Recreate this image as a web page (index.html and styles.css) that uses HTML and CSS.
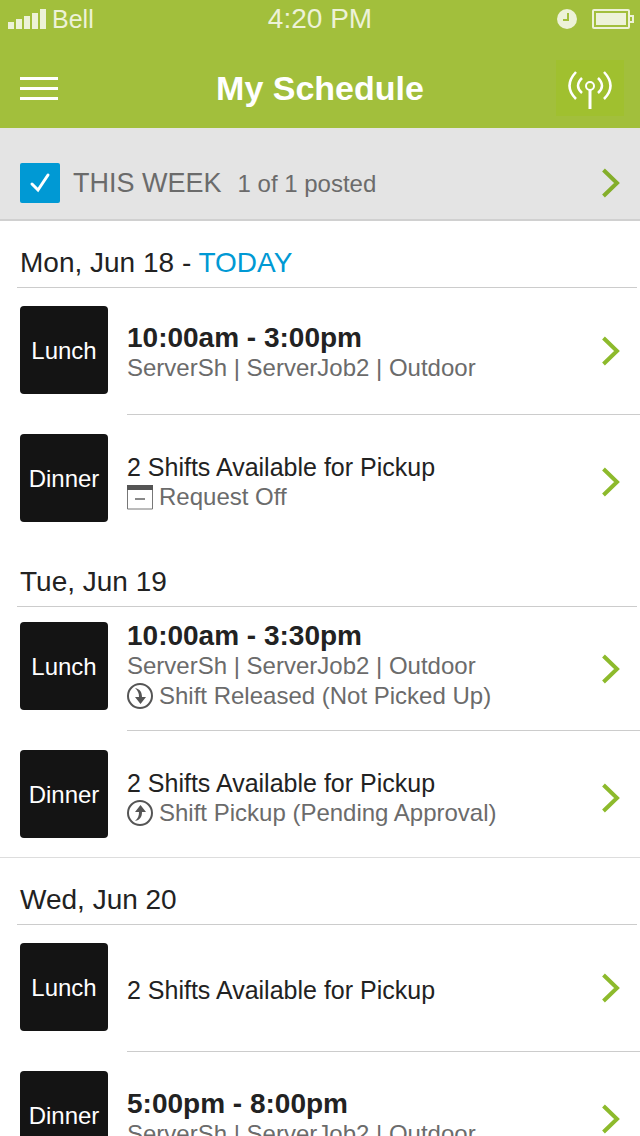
FILE: index.html
```html
<!DOCTYPE html>
<html lang="en">
<head>
<meta charset="utf-8">
<title>My Schedule</title>
<meta name="viewport" content="width=device-width,initial-scale=1">
<link rel="stylesheet" href="styles.css">
</head>
<body>

<!-- shared icons -->
<svg class="sprite" aria-hidden="true">
  <symbol id="chevron" viewBox="0 0 20 30"><path d="M3.500 2 L17 15 L3.500 28" fill="none" stroke="currentColor" stroke-width="4"/></symbol>
</svg>

<header class="top">
  <div class="status">
    <div class="carrier">
      <svg width="38" height="20" viewBox="0 0 38 20" fill="currentColor"><path d="M0 13h6v7H0zM8 10h6v10H8zM16 7h6v13h-6zM24 4h6v16h-6zM32 0h6v20h-6z"/></svg>
      <span>Bell</span>
    </div>
    <time class="clock">4:20 PM</time>
    <div class="power">
      <svg width="20" height="20" viewBox="0 0 20 20"><circle cx="10" cy="10" r="10" fill="currentColor"/><path d="M11 4v7H6" fill="none" stroke="#a2bf3c" stroke-width="2"/></svg>
      <svg width="42" height="20" viewBox="0 0 42 20"><rect x="1" y="1" width="36" height="18" rx="1" fill="none" stroke="currentColor" stroke-width="2"/><path d="M4 4h30v12H4z" fill="currentColor"/><path d="M38 7h3v6h-3" fill="none" stroke="currentColor" stroke-width="2"/></svg>
    </div>
  </div>
  <nav class="bar">
    <button class="menu" aria-label="Menu">
      <svg width="38" height="24" viewBox="0 0 38 24" fill="currentColor"><path d="M0 1h38v3H0zM0 11h38v3H0zM0 21h38v3H0z"/></svg>
    </button>
    <h1>My Schedule</h1>
    <button class="signal" aria-label="Broadcast">
      <svg width="44" height="42" viewBox="0 -4 44 42" fill="none" stroke="currentColor">
        <circle cx="22" cy="15" r="4" stroke-width="2"/>
        <path d="M22 19v19" stroke-width="3"/>
        <path d="M14 7Q6 15 14 22M30 7Q38 15 30 22M8 1Q-5 15 8 28M36 1Q49 15 36 28" stroke-width="2.500"/>
      </svg>
    </button>
  </nav>
</header>

<section class="week">
  <label class="tick">
    <input type="checkbox" checked aria-label="This week">
    <svg width="40" height="40" viewBox="0 0 40 40"><path d="M12 21l6 6L28 12" fill="none" stroke="#fff" stroke-width="3" stroke-linecap="round"/></svg>
  </label>
  <a class="week-link" href="#week">
    <span class="week-name">THIS WEEK</span>
    <span class="week-posted">1 of 1 posted</span>
    <svg class="chevron"><use href="#chevron"/></svg>
  </a>
</section>

<main>
  <section class="day">
    <h2>Mon, Jun 18 - <span class="today">TODAY</span></h2>
    <a class="shift" href="#mon-lunch">
      <span class="meal">Lunch</span>
      <span class="info"><strong>10:00am - 3:00pm</strong><span>ServerSh | ServerJob2 | Outdoor</span></span>
      <svg class="chevron"><use href="#chevron"/></svg>
    </a>
    <a class="shift" href="#mon-dinner">
      <span class="meal">Dinner</span>
      <span class="info">
        <b class="open">2 Shifts Available for Pickup</b>
        <span class="note">
          <svg width="26" height="26" viewBox="0 0 26 26"><path d="M.5 3v22h25V3" fill="none" stroke="#777"/><path d="M0 1h26v5H0z" fill="#555"/><path d="M8 15h10" stroke="#888" stroke-width="2"/></svg>
          Request Off
        </span>
      </span>
      <svg class="chevron"><use href="#chevron"/></svg>
    </a>
  </section>

  <section class="day tight">
    <h2>Tue, Jun 19</h2>
    <a class="shift" href="#tue-lunch">
      <span class="meal">Lunch</span>
      <span class="info">
        <strong>10:00am - 3:30pm</strong>
        <span>ServerSh | ServerJob2 | Outdoor</span>
        <span class="note">
          <svg width="26" height="26" viewBox="0 0 26 26"><circle cx="13" cy="13" r="12" fill="none" stroke="#555" stroke-width="2"/><path d="M8 5c5 1 7 4 7 9h4l-5.500 7L8 14h4c0-4-1-6-4-9z" fill="#555"/></svg>
          Shift Released (Not Picked Up)
        </span>
      </span>
      <svg class="chevron"><use href="#chevron"/></svg>
    </a>
    <a class="shift" href="#tue-dinner">
      <span class="meal">Dinner</span>
      <span class="info">
        <b class="open">2 Shifts Available for Pickup</b>
        <span class="note">
          <svg width="26" height="26" viewBox="0 0 26 26"><circle cx="13" cy="13" r="12" fill="none" stroke="#555" stroke-width="2"/><path d="M8 21c5-1 7-4 7-9h4l-5.500-7L8 12h4c0 4-1 6-4 9z" fill="#555"/></svg>
          Shift Pickup (Pending Approval)
        </span>
      </span>
      <svg class="chevron"><use href="#chevron"/></svg>
    </a>
  </section>

  <section class="day ruled">
    <h2>Wed, Jun 20</h2>
    <a class="shift" href="#wed-lunch">
      <span class="meal">Lunch</span>
      <span class="info"><b class="open">2 Shifts Available for Pickup</b></span>
      <svg class="chevron"><use href="#chevron"/></svg>
    </a>
    <a class="shift" href="#wed-dinner">
      <span class="meal">Dinner</span>
      <span class="info"><strong>5:00pm - 8:00pm</strong><span>ServerSh | ServerJob2 | Outdoor</span></span>
      <svg class="chevron"><use href="#chevron"/></svg>
    </a>
  </section>
</main>

</body>
</html>
```
FILE: styles.css
```css
:root { --green:#a2bf3c; --blue:#0099d4; --ink:#222; --grey:#6b6b6b; --line:#ccc }
* { box-sizing:border-box }
body { margin:0; height:100vh; overflow:hidden; font-family:"Liberation Sans",Arial,sans-serif; color:var(--ink); background:#fff }
h1,h2 { margin:0 }
a { color:inherit; text-decoration:none }
button { border:0; padding:0; background:none; color:inherit; cursor:pointer }
svg { display:block; flex:none }
.sprite { display:none }
.chevron { width:20px; height:30px; margin-left:auto; color:#8dba2c }

/* header */
.top { background:var(--green); color:#fff; padding-bottom:12px }
.status { display:grid; grid-template-columns:1fr auto 1fr; align-items:center; height:38px; padding:0 6px; color:#edf2d8 }
.carrier,.power { display:flex; align-items:center }
.carrier { gap:6px; padding-left:2px; font-size:25px }
.clock { font-size:28px }
.power { gap:15px; justify-content:flex-end }
.bar { display:grid; grid-template-columns:1fr auto 1fr; align-items:center; padding:22px 16px 0 }
.bar h1 { font-size:34px; line-height:40px }
.menu { justify-self:start; padding-left:4px }
.signal { justify-self:end; display:grid; place-items:center; width:68px; height:56px; background:#a0c02f }

/* week summary */
.week { display:flex; align-items:center; gap:13px; padding:35px 20px 16px; background:#e4e4e4; border-bottom:2px solid #d0d0d0; color:var(--grey) }
.tick { display:grid; cursor:pointer }
.tick input { appearance:none; grid-area:1/1; width:40px; height:40px; margin:0; border-radius:2px; background:var(--blue) }
.tick svg { grid-area:1/1; visibility:hidden }
.tick input:checked + svg { visibility:visible }
.week-link { flex:1; display:flex; align-items:baseline }
.week-name { font-size:27px; margin-right:16px }
.week-posted { font-size:24px }
.week .chevron { align-self:center; color:#84ae2a }

/* days */
.day h2 { margin:0 3px 0 17px; padding:25px 3px 7px; border-bottom:1px solid var(--line); font-size:28px; font-weight:normal; line-height:34px }
.today { color:var(--blue) }
.tight { padding-bottom:1px }
.ruled { border-top:1px solid #ddd }
.shift { display:grid; grid-template-columns:88px 1fr auto; align-items:center; column-gap:19px; padding:18px 20px 20px }
.shift .info { margin-top:5px }
.shift .chevron { margin-top:2px }
.tight .shift { padding-top:14px; padding-bottom:19px }
.tight .info { margin-top:0 }
.tight .chevron { margin-top:6px }
.day .shift + .shift { padding:20px 20px 18px; background:linear-gradient(var(--line),var(--line)) 127px 0/100% 1px no-repeat }
.day .shift + .shift .info,.day .shift + .shift .chevron { margin-top:8px }
.meal { display:grid; place-items:center; height:88px; border-radius:4px; background:#141414; color:#fff; font-size:24px; line-height:30px; padding-top:2px }
.info { display:grid; font-size:24px; line-height:30px; color:var(--grey) }
.info strong { font-size:28px; color:var(--ink) }
.open { font-size:25px; font-weight:normal; color:var(--ink) }
.note { display:flex; align-items:center; gap:6px }
```
